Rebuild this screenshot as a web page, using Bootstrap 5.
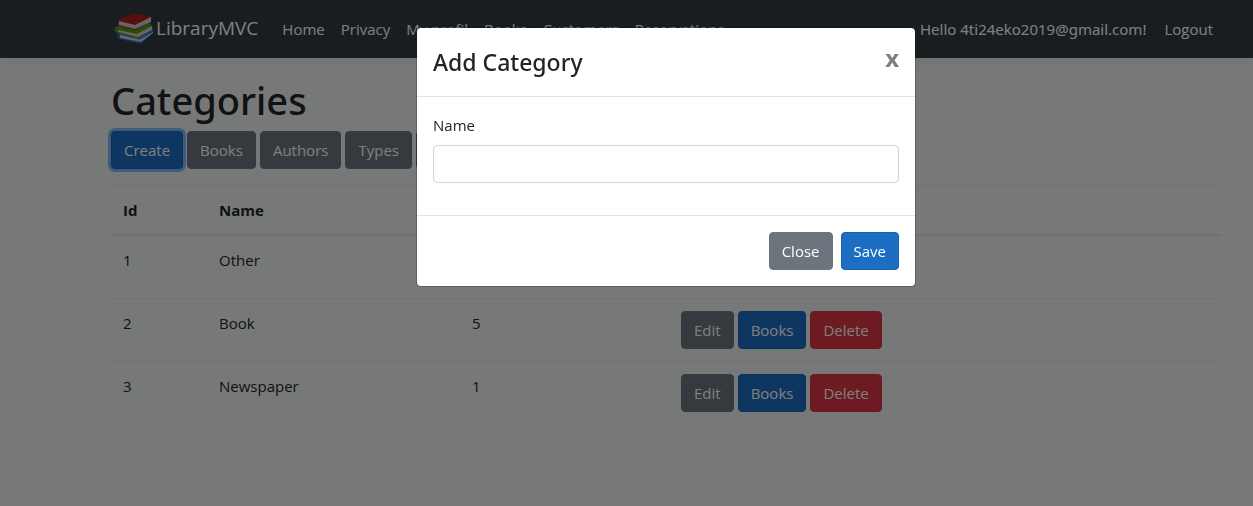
<!DOCTYPE html>
<html lang="en">
<head>
<meta charset="utf-8">
<meta name="viewport" content="width=device-width, initial-scale=1">
<title>Categories - LibraryMVC</title>
<link href="https://cdn.jsdelivr.net/npm/bootstrap@5.3.0/dist/css/bootstrap.min.css" rel="stylesheet">
<style>
  :root { --page-shift: 79px; }
  body { font-family: "Open Sans", "Noto Sans", sans-serif; font-size: 15px; line-height: 24px; color: #212529; background: #eef3f0; min-height: 100vh; }
  .page-shift { padding-left: var(--page-shift); }
  .container { --bs-gutter-x: 30px; }
  .site-nav { background: #343a40; padding-top: 8px; padding-bottom: 8px; border-bottom: 1px solid #343a40; box-shadow: 0 4px 12px rgba(0,0,0,.05); }
  .site-nav > .container { height: 41px; padding-left: 15px; padding-right: 15px; }
  .site-nav .navbar-brand { font-size: 19px; line-height: 30px; color: #fff; margin-right: 16px; padding: 0 0 1px; }
  .site-nav .nav-link { color: #fff; padding: 8px; }
  .greeting { color: #fff; font-family: "Noto Sans", "Open Sans", sans-serif; margin-right: 10px; }
  main.container { padding-top: 18px; }
  h1 { font-family: "Noto Sans", "Open Sans", sans-serif; font-size: 38px; line-height: 48px; font-weight: 500; margin: 0 0 7px; }
  .btn { font-size: 15px; line-height: 24px; padding: 6px 12px; border-radius: 4px; }
  .btn-primary { --bs-btn-bg: #1b6ec2; --bs-btn-border-color: #1861ac; }
  .btn-ring { box-shadow: 0 0 0 3px #7fb8f5; }
  .cat-table { --bs-table-bg: transparent; table-layout: fixed; font-size: 15px; border-color: #dee2e6; margin-top: 16px; }
  .cat-table > :not(caption) > * > * { padding: 12px; border-width: 1px 0 0; }
  .cat-table > thead > tr > th { border-bottom-width: 2px; font-weight: 700; }
  .col-id { width: 96px; } .col-name { width: 253px; } .col-count { width: 209px; }
  .modal { padding-left: var(--page-shift); }
  .modal-dialog { margin: 27px auto; }
  .modal-content { border-radius: 5px; border: 1px solid rgba(0,0,0,.2); background-clip: padding-box; }
  .modal-header { align-items: flex-start; padding: 16px; border-color: #dee2e6; }
  .modal-title { font-family: "Noto Sans", "Open Sans", sans-serif; font-size: 23px; line-height: 36px; font-weight: 500; }
  .close-x { background: none; border: 0; padding: 0; margin: 0; font-size: 24px; line-height: 28px; font-weight: 700; color: #7f7f7f; }
  .modal-body .form-control { height: 38px; border: 1px solid #ced4da; border-radius: 4px; }
  .modal-footer { padding: 16px; gap: 8px; border-color: #dee2e6; }
  .modal-footer > * { margin: 0; }
</style>
</head>
<body>
<nav class="navbar navbar-expand navbar-dark site-nav page-shift">
  <div class="container">
    <a class="navbar-brand d-flex align-items-center" href="#">
      <svg width="45" height="34" viewBox="-2 0 45 34" aria-hidden="true">
        <path d="M5 22 22 19 40 19 41 21 28 33 6 28Q3 25 5 22" fill="#2463c5"/>
        <path d="M7 23 27 27 40 20 40 22 28 31 7 27Z" fill="#cfc6d6"/>
        <path d="M6 23 27 28 41 20" fill="none" stroke="#2463c5" stroke-width="1"/>
        <path d="M2 17Q0 20 4 22L25 28 40 18 39 15 24 11Z" fill="#4f961c"/>
        <path d="M5 19 24 23 39 15 39 19 25 26 5 21Z" fill="#cfc6d6"/>
        <path d="M2 17 24 22 39 14 35 12 8 13Z" fill="#4f961c"/>
        <path d="M5 10Q4 13 6 15L22 19 38 11 38 5 21 3Z" fill="#a82018"/>
        <path d="M6 10 22 14 38 6 38 11 22 18 6 14Z" fill="#cfc6d6"/>
        <path d="M5 9 20 3 38 5 22 13Z" fill="#a82018"/>
      </svg><span>LibraryMVC</span>
    </a>
    <div class="navbar-nav me-auto">
      <a class="nav-link" href="#">Home</a>
      <a class="nav-link" href="#">Privacy</a>
      <a class="nav-link" href="#">My profil</a>
      <a class="nav-link" href="#">Books</a>
      <a class="nav-link" href="#">Customers</a>
      <a class="nav-link" href="#">Reservations</a>
    </div>
    <div class="navbar-nav align-items-center">
      <span class="greeting">Hello 4ti24eko2019@gmail.com!</span>
      <a class="nav-link" href="#">Logout</a>
    </div>
  </div>
</nav>

<div class="page-shift">
  <main class="container">
    <h1>Categories</h1>
    <div class="d-flex gap-1">
      <button type="button" class="btn btn-primary btn-ring">Create</button>
      <button type="button" class="btn btn-secondary">Books</button>
      <button type="button" class="btn btn-secondary">Authors</button>
      <button type="button" class="btn btn-secondary">Types</button>
      <button type="button" class="btn btn-secondary">Publishers</button>
    </div>
    <table class="table cat-table">
      <thead>
        <tr><th class="col-id">Id</th><th class="col-name">Name</th><th class="col-count"></th><th></th></tr>
      </thead>
      <tbody>
        <tr><td>1</td><td>Other</td><td></td><td><div class="d-flex gap-1"><button type="button" class="btn btn-secondary">Edit</button><button type="button" class="btn btn-primary">Books</button><button type="button" class="btn btn-danger">Delete</button></div></td></tr>
        <tr><td>2</td><td>Book</td><td>5</td><td><div class="d-flex gap-1"><button type="button" class="btn btn-secondary">Edit</button><button type="button" class="btn btn-primary">Books</button><button type="button" class="btn btn-danger">Delete</button></div></td></tr>
        <tr><td>3</td><td>Newspaper</td><td>1</td><td><div class="d-flex gap-1"><button type="button" class="btn btn-secondary">Edit</button><button type="button" class="btn btn-primary">Books</button><button type="button" class="btn btn-danger">Delete</button></div></td></tr>
      </tbody>
    </table>
  </main>
</div>

<div class="modal-backdrop show"></div>
<div class="modal show d-block" role="dialog" aria-modal="true" aria-labelledby="addTitle">
  <div class="modal-dialog">
    <form class="modal-content">
      <div class="modal-header">
        <h5 class="modal-title" id="addTitle">Add Category</h5>
        <button type="button" class="close-x" aria-label="Close">x</button>
      </div>
      <div class="modal-body">
        <div class="mb-3">
          <label class="mb-2 d-block" for="catName">Name</label>
          <input type="text" class="form-control" id="catName">
        </div>
      </div>
      <div class="modal-footer">
        <button type="button" class="btn btn-secondary">Close</button>
        <button type="submit" class="btn btn-primary">Save</button>
      </div>
    </form>
  </div>
</div>
<script src="https://cdn.jsdelivr.net/npm/bootstrap@5.3.0/dist/js/bootstrap.bundle.min.js"></script>
</body>
</html>
